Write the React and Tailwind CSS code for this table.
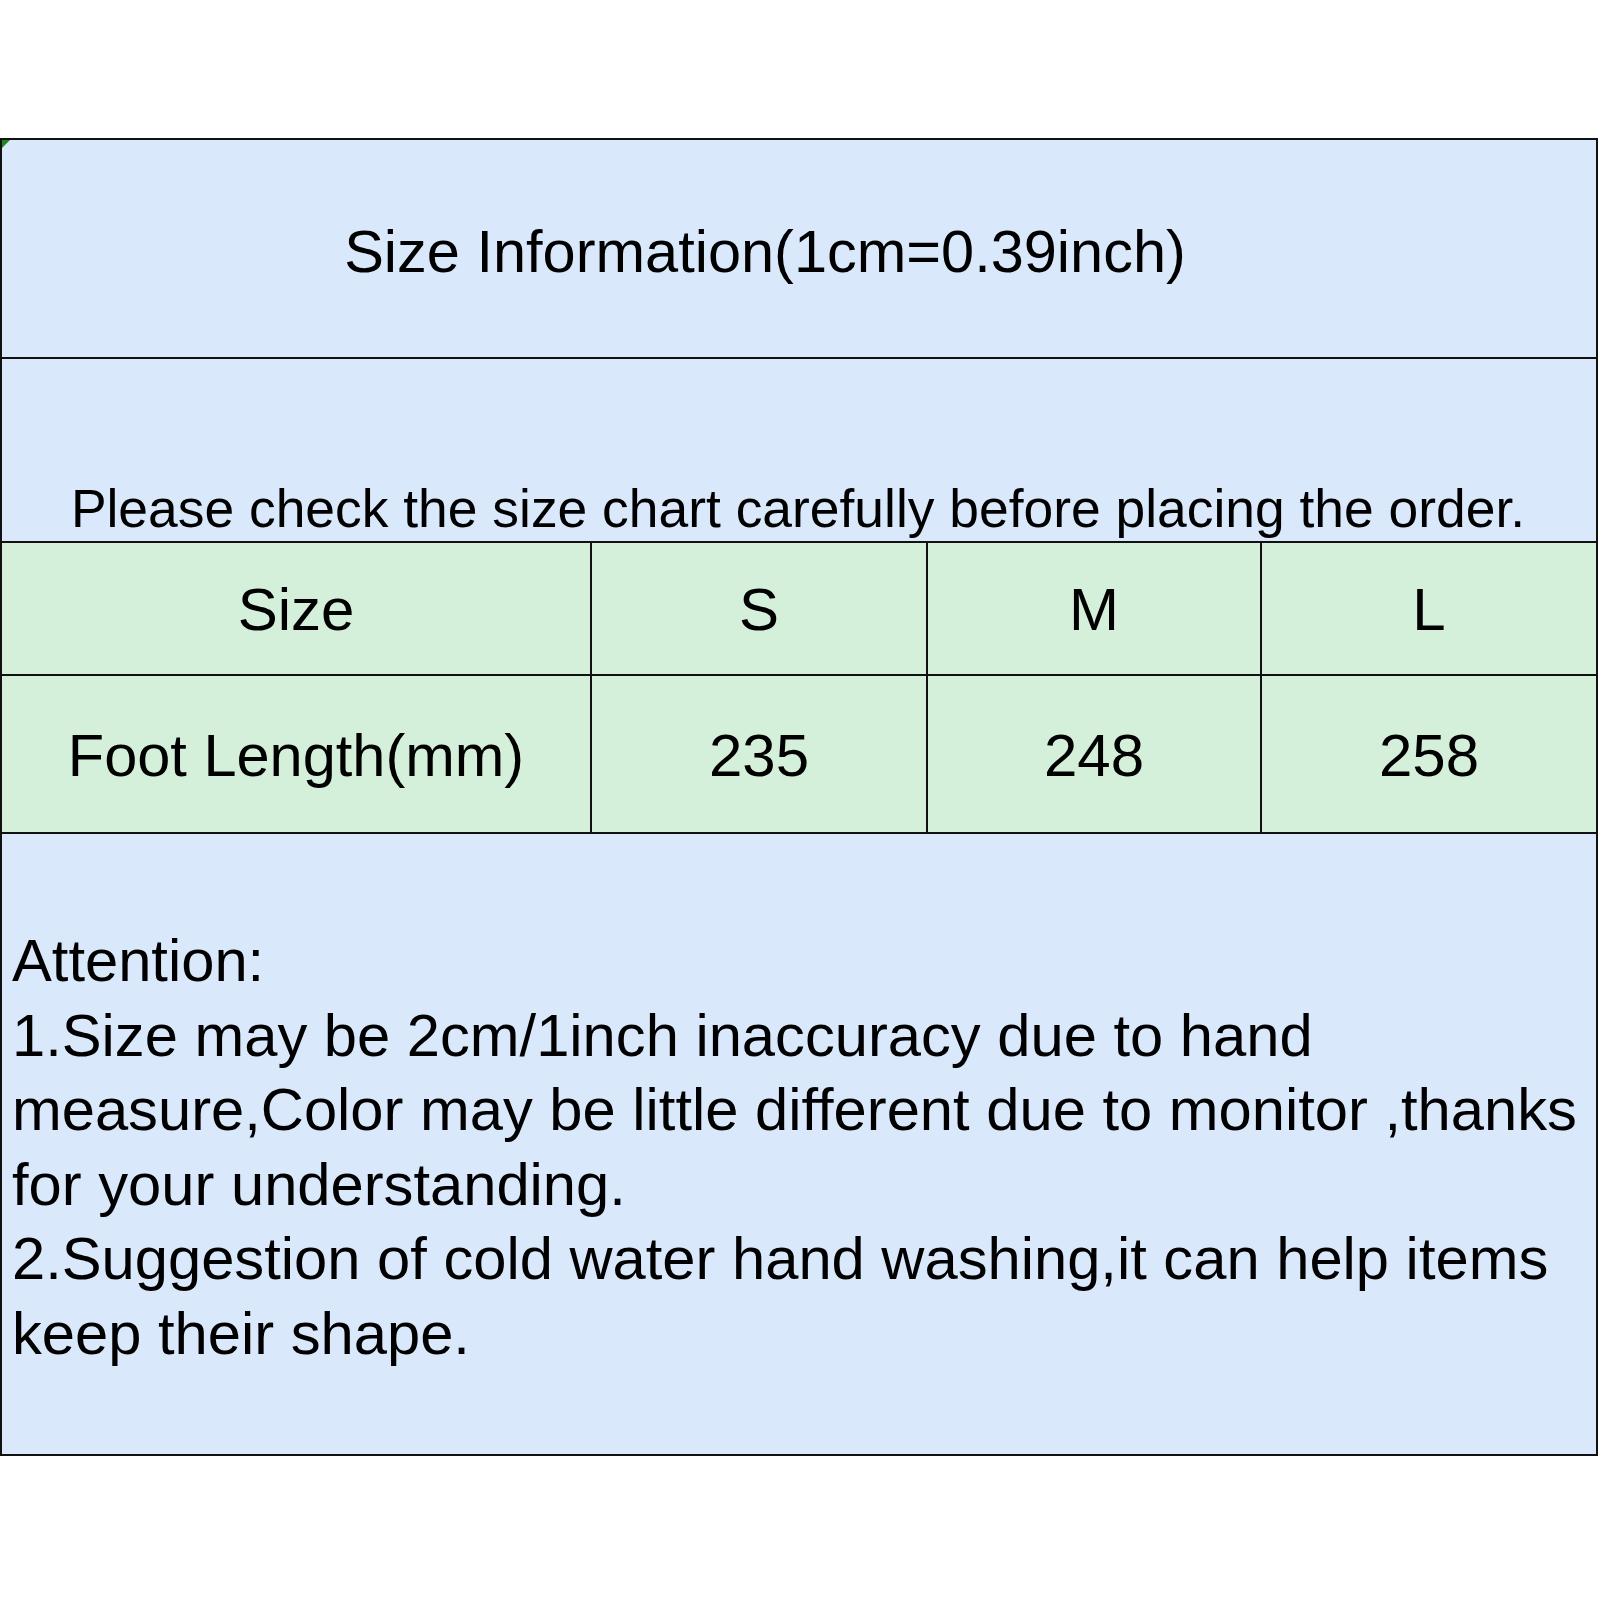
const font = { fontFamily: '"Liberation Sans", Arial, sans-serif' }

const sizes = [
  { label: 'S', foot: '235' },
  { label: 'M', foot: '248' },
  { label: 'L', foot: '258' },
]

export default function App() {
  return (
    <div className="w-[1600px] h-[1600px] bg-white pt-[138px] text-black" style={font}>
      <div className="relative w-[1598px] border-2 border-[#111] bg-[#dae8fc]">
        {/* comment marker */}
        <svg className="absolute left-0 top-0" width="8" height="8" viewBox="0 0 8 8">
          <path d="M0 0 L8 0 L0 8 Z" fill="#1a8a1a" />
        </svg>

        {/* Title */}
        <div className="h-[219px] border-b-2 border-[#111] flex items-center justify-center pr-[68px] pt-[6px]">
          <span className="text-[59.5px] leading-none">Size Information(1cm=0.39inch)</span>
        </div>

        {/* Notice */}
        <div className="h-[184px] border-b-2 border-[#111] flex items-end justify-center pb-[2px] pr-[2px]">
          <span className="text-[53.4px] leading-[61px] whitespace-nowrap">
            Please check the size chart carefully before placing the order.
          </span>
        </div>

        {/* Size row */}
        <div className="grid grid-cols-[590px_336px_334px_1fr] h-[133px] border-b-2 border-[#111] bg-[#d4f0da]">
          <div className="border-r-2 border-[#111] flex items-center justify-center text-[60px] pt-[2px]">Size</div>
          {sizes.map((s, i) => (
            <div
              key={s.label}
              className={`flex items-center justify-center text-[60px] pt-[2px] ${i < 2 ? 'border-r-2 border-[#111]' : ''}`}
            >
              {s.label}
            </div>
          ))}
        </div>

        {/* Foot length row */}
        <div className="grid grid-cols-[590px_336px_334px_1fr] h-[158px] border-b-2 border-[#111] bg-[#d4f0da]">
          <div className="border-r-2 border-[#111] flex items-center justify-center text-[59.5px] pt-[4px]">Foot Length(mm)</div>
          {sizes.map((s, i) => (
            <div
              key={s.foot}
              className={`flex items-center justify-center text-[60px] pt-[4px] ${i < 2 ? 'border-r-2 border-[#111]' : ''}`}
            >
              {s.foot}
            </div>
          ))}
        </div>

        {/* Attention */}
        <div className="h-[620px] pt-[90px] pl-[10px] text-[59.7px] leading-[74.5px] whitespace-nowrap">
          <div>Attention:</div>
          <div>1.Size may be 2cm/1inch inaccuracy due to hand</div>
          <div>measure,Color may be little different due to monitor ,thanks</div>
          <div>for your understanding.</div>
          <div>2.Suggestion of cold water hand washing,it can help items</div>
          <div>keep their shape.</div>
        </div>
      </div>
    </div>
  )
}
